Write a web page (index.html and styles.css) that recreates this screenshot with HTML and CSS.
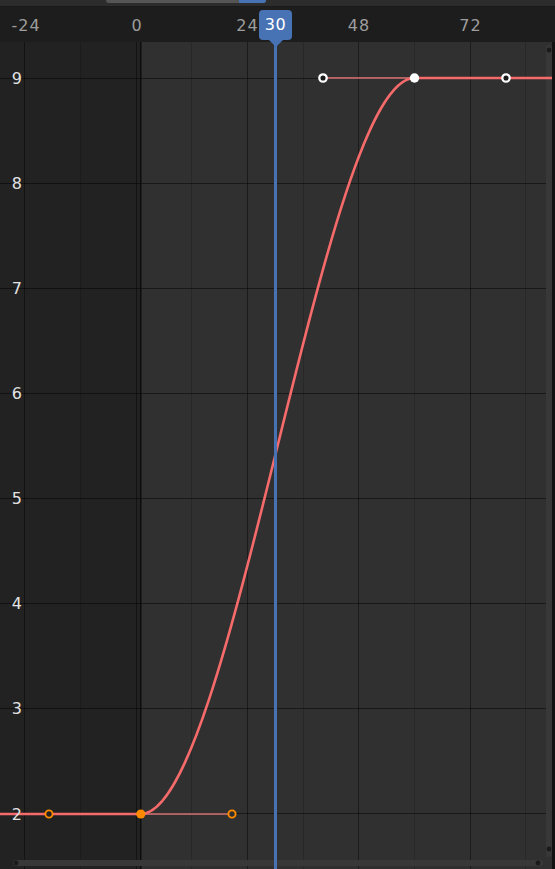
FILE: index.html
```html
<!DOCTYPE html>
<html lang="en">
<head>
  <meta charset="UTF-8">
  <title>Graph Editor</title>
  <link rel="stylesheet" href="styles.css">
</head>
<body>

<div class="editor">
  <div class="topbar">
    <div class="scroll-thumb"><span class="scroll-thumb-end"></span></div>
  </div>

  <div class="view">
    <svg class="graph" width="555" height="862" viewBox="0 7 555 862">
      <!-- frame ruler -->
      <rect x="0" y="7" width="555" height="35" fill="#1d1d1d"/>

      <!-- curve area, darker part is outside the scene range -->
      <rect x="0" y="42" width="555" height="827" fill="#303030"/>
      <rect x="0" y="42" width="141" height="827" fill="#222222"/>

      <!-- minor frame lines (every 12) -->
      <g stroke="rgba(0,0,0,0.16)" stroke-width="1">
        <line x1="80.5" y1="42" x2="80.5" y2="869"/>
        <line x1="191.5" y1="42" x2="191.5" y2="869"/>
        <line x1="303.5" y1="42" x2="303.5" y2="869"/>
        <line x1="414.5" y1="42" x2="414.5" y2="869"/>
        <line x1="525.5" y1="42" x2="525.5" y2="869"/>
      </g>

      <!-- major frame lines (every 24) -->
      <g stroke="rgba(0,0,0,0.42)" stroke-width="1">
        <line x1="24.5" y1="42" x2="24.5" y2="869"/>
        <line x1="136.5" y1="42" x2="136.5" y2="869"/>
        <line x1="247.5" y1="42" x2="247.5" y2="869"/>
        <line x1="358.5" y1="42" x2="358.5" y2="869"/>
        <line x1="470.5" y1="42" x2="470.5" y2="869"/>
      </g>

      <!-- value lines -->
      <g stroke="rgba(0,0,0,0.48)" stroke-width="1">
        <line x1="0" y1="78.5" x2="552" y2="78.5"/>
        <line x1="0" y1="183.5" x2="552" y2="183.5"/>
        <line x1="0" y1="288.5" x2="552" y2="288.5"/>
        <line x1="0" y1="393.5" x2="552" y2="393.5"/>
        <line x1="0" y1="498.5" x2="552" y2="498.5"/>
        <line x1="0" y1="603.5" x2="552" y2="603.5"/>
        <line x1="0" y1="708.5" x2="552" y2="708.5"/>
        <line x1="0" y1="813.5" x2="552" y2="813.5"/>
      </g>

      <!-- scene start frame -->
      <line x1="140.8" y1="42" x2="140.8" y2="869" stroke="#0c0c0c" stroke-width="1.4"/>

      <!-- scrollbars -->
      <rect x="552" y="42" width="3" height="827" fill="#121212"/>
      <rect x="546" y="45" width="6" height="812" rx="3" fill="#383838"/>
      <circle cx="549" cy="50" r="2.4" fill="#1a1a1a"/>
      <circle cx="549" cy="849" r="2.4" fill="#1a1a1a"/>
      <rect x="13" y="860" width="530" height="6" rx="3" fill="#383838"/>
      <circle cx="16" cy="863" r="2.4" fill="#1a1a1a"/>
      <circle cx="538" cy="863" r="2.4" fill="#1a1a1a"/>

      <!-- handle lines -->
      <line x1="140.8" y1="814" x2="232" y2="814" stroke="#d87676" stroke-width="1.3"/>
      <line x1="323" y1="78" x2="414.5" y2="78" stroke="#e07878" stroke-width="1.3"/>

      <!-- f-curve with constant extrapolation on both sides -->
      <path d="M0 814 L140.8 814 C232 814 323 78 414.5 78 L552 78"
            fill="none" stroke="#f56a6a" stroke-width="2.6" stroke-linejoin="round"/>

      <!-- first key (selected) -->
      <circle cx="49" cy="814" r="3.6" fill="#222222" stroke="#ff8a00" stroke-width="1.9"/>
      <circle cx="232" cy="814" r="3.6" fill="#303030" stroke="#ff8a00" stroke-width="1.9"/>
      <circle cx="140.8" cy="814" r="4.6" fill="#ff8a00"/>

      <!-- second key -->
      <circle cx="323" cy="78" r="3.7" fill="#1a1a1a" stroke="#ffffff" stroke-width="2.3"/>
      <circle cx="506" cy="78" r="3.7" fill="#1a1a1a" stroke="#ffffff" stroke-width="2.3"/>
      <circle cx="414.5" cy="78" r="4.7" fill="#ffffff"/>

      <!-- frame numbers -->
      <g class="frame-labels" text-anchor="middle">
        <text x="26" y="31">-24</text>
        <text x="137" y="31">0</text>
        <text x="247.5" y="31">24</text>
        <text x="359" y="31">48</text>
        <text x="470.5" y="31">72</text>
      </g>

      <!-- values -->
      <g class="value-labels" text-anchor="end">
        <text x="22" y="84">9</text>
        <text x="22" y="189">8</text>
        <text x="22" y="294">7</text>
        <text x="22" y="399">6</text>
        <text x="22" y="504">5</text>
        <text x="22" y="609">4</text>
        <text x="22" y="714">3</text>
        <text x="22" y="819.5">2</text>
      </g>
    </svg>

    <div class="playhead-line"></div>
    <div class="playhead">30</div>
  </div>
</div>

</body>
</html>
```

FILE: styles.css
```css
* { box-sizing: border-box; }
body { margin: 0; background: #303030; font-family: "DejaVu Sans", "Noto Sans", sans-serif; }

.editor {
  width: 555px;
  height: 869px;
  display: flex;
  flex-direction: column;
  overflow: hidden;
}

.topbar {
  height: 7px;
  flex: none;
  background: #2c2c2c;
  border-bottom: 1px solid #1a1a1a;
  position: relative;
}

.scroll-thumb {
  margin-left: 106px;
  width: 160px;
  height: 3px;
  background: #555555;
  border-radius: 0 0 4px 4px;
  display: flex;
  justify-content: flex-end;
  overflow: hidden;
}

.scroll-thumb-end {
  width: 27px;
  background: #4772b3;
}

.view {
  flex: 1;
  position: relative;
}

.graph { display: block; }

.frame-labels {
  font-size: 16px;
  letter-spacing: 1px;
  fill: #9d9d9d;
}

.value-labels {
  font-size: 16px;
  fill: #e2e2e2;
}

/* current frame marker */
.playhead {
  position: absolute;
  left: 259px;
  top: 2.5px;
  width: 33px;
  height: 30px;
  background: #4772b3;
  border-radius: 4px;
  color: #ffffff;
  font-size: 16px;
  letter-spacing: 0.5px;
  line-height: 30px;
  text-align: center;
}

.playhead::after {
  content: "";
  position: absolute;
  left: 8.5px;
  top: 29px;
  border-left: 8px solid transparent;
  border-right: 8px solid transparent;
  border-top: 8px solid #4772b3;
}

.playhead-line {
  position: absolute;
  left: 274px;
  top: 36px;
  bottom: 0;
  width: 3px;
  background: #4772b3;
}
```
